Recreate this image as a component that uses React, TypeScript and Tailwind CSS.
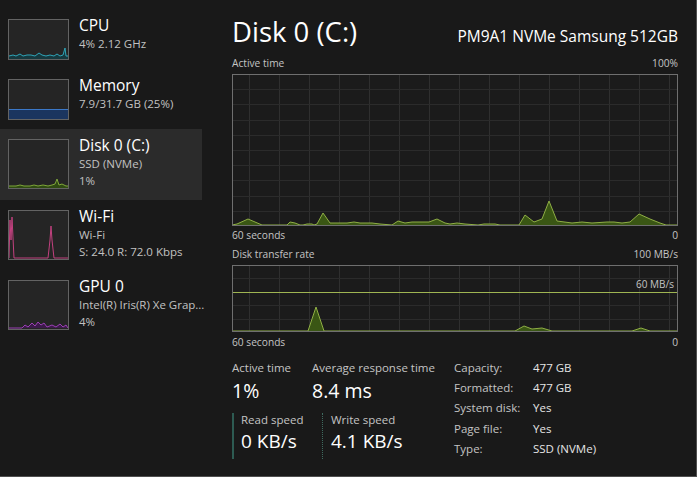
import React from "react";

type Pt = [number, number];

function areaPath(pts: Pt[], w: number, base: number) {
  const body = pts.map(([x, h]) => `L${x},${base - h}`).join(" ");
  return `M0,${base} ${body} L${w},${base} Z`;
}
function linePath(pts: Pt[], base: number) {
  return pts.map(([x, h], i) => `${i === 0 ? "M" : "L"}${x},${base - h}`).join(" ");
}

const g1: Pt[] = [
  [0, 0], [5, 1], [16, 6], [30, 0], [55, 0], [58, 3], [63, 2], [68, 0], [71, 0], [75, 1], [80, 1], [82, 0],
  [85, 1], [91, 12], [98, 2], [115, 2], [122, 3], [128, 2], [140, 2], [148, 1], [160, 0], [163, 2], [166, 4],
  [173, 2], [180, 3], [188, 3], [197, 3], [205, 6], [213, 2], [218, 1], [225, 2], [233, 1], [246, 0], [252, 1],
  [263, 1], [268, 0], [287, 0], [293, 10], [302, 3], [310, 6], [317, 24], [325, 4], [340, 2], [350, 3],
  [360, 2], [375, 3], [382, 3], [390, 2], [398, 3], [407, 11], [418, 6], [428, 2], [434, 0], [446, 0],
];
const g2: Pt[] = [
  [0, 0], [76, 0], [84, 24], [92, 0], [283, 0], [292, 5], [300, 2], [310, 3], [320, 0], [400, 0], [409, 3],
  [418, 0], [446, 0],
];

function Graph({ w, h, data, rows, sixty }: { w: number; h: number; data: Pt[]; rows: number; sixty?: boolean }) {
  const base = h - 1;
  const vlines: number[] = [];
  for (let x = 17; x < w; x += 30) vlines.push(x);
  const hlines: number[] = [];
  for (let i = 1; i < rows; i++) hlines.push(Math.round((h / rows) * i) + 0.5);
  return (
    <div className="relative" style={{ width: w, height: h }}>
      <svg width={w} height={h} className="block">
        <rect x={0} y={0} width={w} height={h} fill="#1b1b1b" />
        {vlines.map((x) => (
          <line key={"v" + x} x1={x + 0.5} y1={0} x2={x + 0.5} y2={h} stroke="#2f2f2f" strokeWidth={1} />
        ))}
        {hlines.map((y) => (
          <line key={"h" + y} x1={0} y1={y} x2={w} y2={y} stroke="#2b2b2b" strokeWidth={1} />
        ))}
        {sixty && (
          <line x1={0} y1={Math.round(h * 0.4) + 0.5} x2={w} y2={Math.round(h * 0.4) + 0.5} stroke="#9fb552" strokeWidth={1} />
        )}
        <path d={areaPath(data, w, base)} fill="#3a5614" />
        <path d={linePath(data, base)} fill="none" stroke="#8fae45" strokeWidth={1} />
        <rect x={0.5} y={0.5} width={w - 1} height={h - 1} fill="none" stroke="#6f6f6f" strokeWidth={1} />
      </svg>
      {sixty && (
        <div className="absolute right-[4px] top-[12px] text-[10px] leading-[14px] text-[#c4c4c4]">60 MB/s</div>
      )}
    </div>
  );
}

function Thumb({ h, children }: { h: number; children: React.ReactNode }) {
  return (
    <svg width={61} height={h} className="block shrink-0">
      <rect x={0} y={0} width={61} height={h} fill="#252525" />
      {children}
      <rect x={0.5} y={0.5} width={60} height={h - 1} fill="none" stroke="#636363" />
    </svg>
  );
}

function pathFrom(pts: Pt[]) {
  return pts.map(([x, y], i) => `${i === 0 ? "M" : "L"}${x},${y}`).join(" ");
}

const cpuPts: Pt[] = [
  [1, 37], [5, 36], [8, 37], [12, 35], [15, 37], [19, 36], [23, 36], [27, 37], [31, 34], [34, 36], [38, 37],
  [42, 36], [46, 37], [49, 35], [52, 37], [55, 36], [57, 29], [58, 37], [60, 37],
];
const diskPts: Pt[] = [
  [1, 47], [8, 47], [12, 46], [16, 47], [22, 47], [26, 46], [30, 47], [35, 46], [40, 47], [44, 46], [47, 45],
  [49, 40], [51, 46], [54, 45], [58, 47], [60, 47],
];
const wifiPts: Pt[] = [
  [1, 48], [2, 10], [3, 30], [4, 7], [6, 48], [40, 48], [42, 30], [43, 16], [44, 30], [46, 48], [60, 48],
];
const gpuPts: Pt[] = [
  [1, 48], [14, 48], [17, 45], [20, 47], [24, 43], [27, 46], [30, 42], [33, 45], [36, 43], [39, 47], [44, 45],
  [48, 47], [52, 44], [55, 47], [58, 45], [60, 48],
];

function SideItem({
  thumb,
  title,
  lines,
  selected,
  height,
}: {
  thumb: React.ReactNode;
  title: string;
  lines: string[];
  selected?: boolean;
  height: number;
}) {
  return (
    <div
      className={`flex items-start gap-[10px] pl-[8px] pt-[10px] ${selected ? "bg-[#2b2b2b]" : ""}`}
      style={{ height }}
    >
      {thumb}
      <div className="-mt-[4px] flex flex-col whitespace-nowrap">
        <div className="text-[15.5px] leading-[20px] text-white">{title}</div>
        {lines.map((l) => (
          <div key={l} className="text-[11.5px] leading-[17px] text-[#c2c2c2]">
            {l}
          </div>
        ))}
      </div>
    </div>
  );
}

export default function App() {
  return (
    <div className="flex h-[477px] w-[697px] overflow-hidden border-b border-r border-[#4f4f4f] bg-[#191919] font-['Open_Sans',sans-serif]">
      {/* Sidebar */}
      <div className="flex w-[202px] shrink-0 flex-col pt-[9px]">
        <SideItem
          height={60}
          title="CPU"
          lines={["4%  2.12 GHz"]}
          thumb={
            <Thumb h={41}>
              <path d={pathFrom([...cpuPts, [60, 40], [1, 40]])} fill="#16393f" />
              <path d={pathFrom(cpuPts)} fill="none" stroke="#2fa5b8" strokeWidth={1} />
            </Thumb>
          }
        />
        <SideItem
          height={60}
          title="Memory"
          lines={["7.9/31.7 GB (25%)"]}
          thumb={
            <Thumb h={41}>
              <rect x={1} y={30} width={59} height={10} fill="#1b355f" />
              <line x1={1} y1={30.5} x2={60} y2={30.5} stroke="#3b78c8" strokeWidth={1} />
            </Thumb>
          }
        />
        <SideItem
          height={71}
          selected
          title="Disk 0 (C:)"
          lines={["SSD (NVMe)", "1%"]}
          thumb={
            <Thumb h={50}>
              <path d={pathFrom([...diskPts, [60, 49], [1, 49]])} fill="#2f4a12" />
              <path d={pathFrom(diskPts)} fill="none" stroke="#7fa63a" strokeWidth={1} />
            </Thumb>
          }
        />
        <SideItem
          height={70}
          title="Wi-Fi"
          lines={["Wi-Fi", "S: 24.0  R: 72.0 Kbps"]}
          thumb={
            <Thumb h={50}>
              <path d={pathFrom(wifiPts)} fill="none" stroke="#c2417f" strokeWidth={1} />
            </Thumb>
          }
        />
        <SideItem
          height={70}
          title="GPU 0"
          lines={["Intel(R) Iris(R) Xe Grap...", "4%"]}
          thumb={
            <Thumb h={50}>
              <path d={pathFrom([...gpuPts, [1, 48]])} fill="#3c1a4a" />
              <path d={pathFrom(gpuPts)} fill="none" stroke="#9b3fb5" strokeWidth={1} />
            </Thumb>
          }
        />
      </div>

      {/* Main */}
      <div className="flex w-[476px] flex-col pl-[30px] pt-[13px]">
        <div className="flex h-[38px] items-baseline justify-between">
          <div className="text-[27.5px] leading-[38px] text-white">Disk 0 (C:)</div>
          <div className="text-[15.5px] leading-[20px] text-white">PM9A1 NVMe Samsung 512GB</div>
        </div>
        <div className="mt-[5px] flex h-[16px] items-center justify-between text-[10.2px] text-[#c4c4c4]">
          <span>Active time</span>
          <span>100%</span>
        </div>
        <div className="mt-[2px]">
          <Graph w={446} h={152} data={g1} rows={10} />
        </div>
        <div className="mt-[2px] flex h-[16px] items-center justify-between text-[10.2px] text-[#c4c4c4]">
          <span>60 seconds</span>
          <span>0</span>
        </div>
        <div className="mt-[3px] flex h-[16px] items-center justify-between text-[10.2px] text-[#c4c4c4]">
          <span>Disk transfer rate</span>
          <span>100 MB/s</span>
        </div>
        <div className="mt-[2px]">
          <Graph w={446} h={67} data={g2} rows={5} sixty />
        </div>
        <div className="mt-[3px] flex h-[16px] items-center justify-between text-[10.2px] text-[#c4c4c4]">
          <span>60 seconds</span>
          <span>0</span>
        </div>

        {/* Stats */}
        <div className="mt-[9px] flex">
          <div className="flex w-[222px] flex-col">
            <div className="flex">
              <div className="w-[80px]">
                <div className="text-[11.5px] leading-[15px] text-[#c4c4c4]">Active time</div>
                <div className="mt-[4px] text-[19.5px] leading-[24px] text-white">1%</div>
              </div>
              <div>
                <div className="text-[11.5px] leading-[15px] text-[#c4c4c4]">Average response time</div>
                <div className="mt-[4px] text-[19.5px] leading-[24px] text-white">8.4 ms</div>
              </div>
            </div>
            <div className="mt-[10px] flex">
              <div className="w-[90px] border-l-2 border-[#2d5b52] pb-[6px] pl-[7px]">
                <div className="text-[11.5px] leading-[14px] text-[#c4c4c4]">Read speed</div>
                <div className="mt-[2px] text-[19px] leading-[24px] text-white">0 KB/s</div>
              </div>
              <div className="border-l border-dotted border-[#3f6b60] pb-[6px] pl-[8px]">
                <div className="text-[11.5px] leading-[14px] text-[#c4c4c4]">Write speed</div>
                <div className="mt-[2px] text-[19px] leading-[24px] text-white">4.1 KB/s</div>
              </div>
            </div>
          </div>
          <div className="-mt-[2px] grid grid-cols-[79px_auto] text-[11.5px] leading-[20px]">
            <span className="text-[#c4c4c4]">Capacity:</span>
            <span className="text-[#e6e6e6]">477 GB</span>
            <span className="text-[#c4c4c4]">Formatted:</span>
            <span className="text-[#e6e6e6]">477 GB</span>
            <span className="text-[#c4c4c4]">System disk:</span>
            <span className="text-[#e6e6e6]">Yes</span>
            <span className="text-[#c4c4c4]">Page file:</span>
            <span className="text-[#e6e6e6]">Yes</span>
            <span className="text-[#c4c4c4]">Type:</span>
            <span className="text-[#e6e6e6]">SSD (NVMe)</span>
          </div>
        </div>
      </div>
    </div>
  );
}
